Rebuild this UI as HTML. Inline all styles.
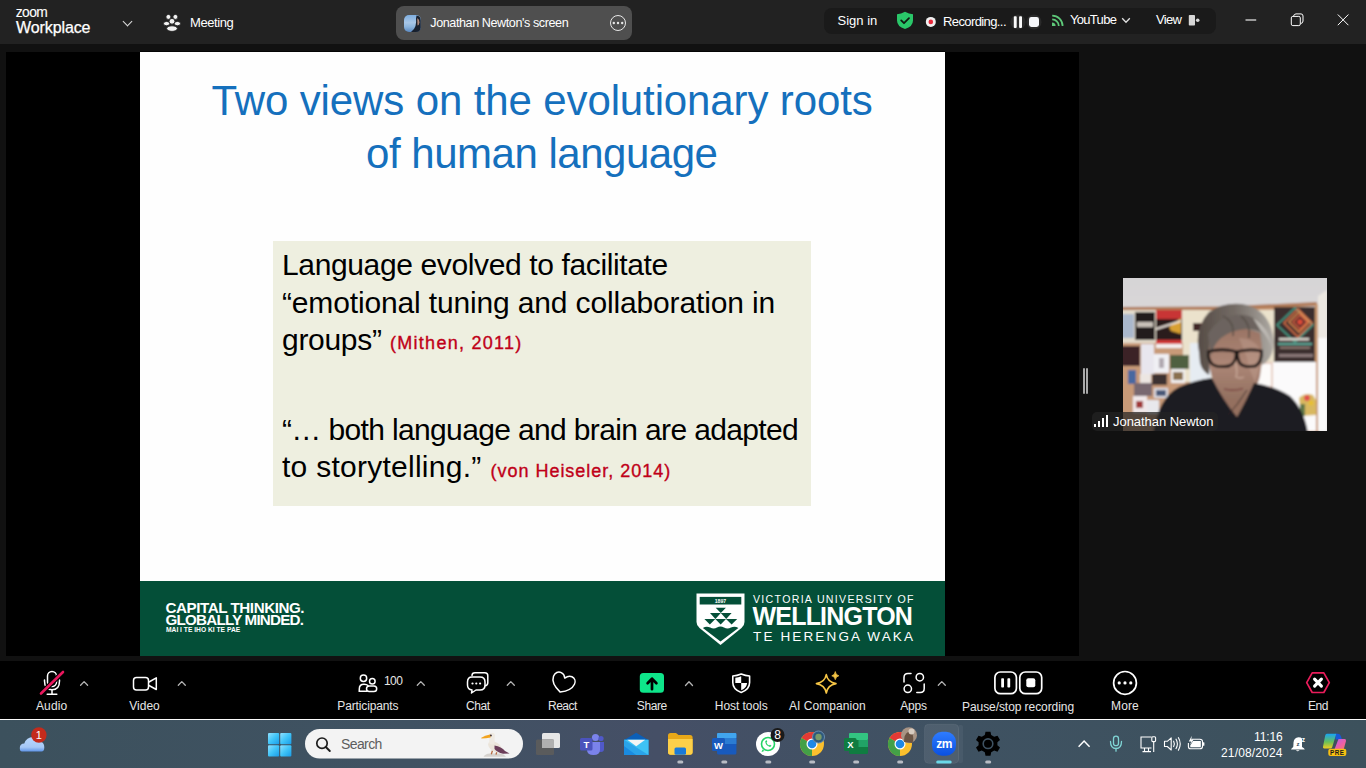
<!DOCTYPE html>
<html><head><meta charset="utf-8">
<style>
*{margin:0;padding:0;box-sizing:border-box}
html,body{width:1366px;height:768px;overflow:hidden;background:#111;font-family:"Liberation Sans",sans-serif}
.a{position:absolute}
.t{position:absolute;white-space:pre;line-height:1}
#top{left:0;top:0;width:1366px;height:44px;background:#222}
#share{left:6px;top:52px;width:1073px;height:604px;background:#000}
#slide{left:140px;top:52px;width:805px;height:604px;background:#fefefe;overflow:hidden}
#tool{left:0;top:661px;width:1366px;height:58px;background:#000}
#wline{left:0;top:719px;width:1366px;height:1px;background:#fafafa}
#task{left:0;top:720px;width:1366px;height:48px;background:linear-gradient(90deg,#3c515d 0%,#405262 30%,#454f66 48%,#3f5262 70%,#3c515c 100%)}
.ui{color:#fff;font-size:13px}
.lbl{color:#e6e6e6;font-size:12px}
.chev{position:absolute;width:6px;height:6px;border-left:1.5px solid #bdbdbd;border-top:1.5px solid #bdbdbd;transform:rotate(45deg)}
</style></head><body>
<!-- top bar -->
<div id="top" class="a"></div>
<div class="t" style="left:15.8px;top:6.1px;font-size:13.8px;color:#fff;letter-spacing:-0.6px;-webkit-text-stroke:0.12px #fff">zoom</div>
<div class="t" style="left:16px;top:20px;font-size:16px;color:#fff;-webkit-text-stroke:0.25px #fff;letter-spacing:-0.1px">Workplace</div>
<div class="a" style="left:124px;top:18px;width:7px;height:7px;border-right:1.5px solid #ddd;border-bottom:1.5px solid #ddd;transform:rotate(45deg)"></div>
<div class="t ui" style="left:190px;top:16.2px;letter-spacing:-0.4px">Meeting</div>

<div class="a" style="left:396px;top:6px;width:236px;height:34px;border-radius:8px;background:#4f4f4f"></div>
<div class="a" style="left:404px;top:15px;width:17px;height:17px;border-radius:5px;background:linear-gradient(180deg,#7eaee0 0%,#a8c6e6 45%,#8cb4dc 70%,#5a88c0 100%)"></div>
<div class="t" style="left:430.3px;top:17.2px;font-size:12.6px;color:#fff;letter-spacing:-0.42px">Jonathan Newton's screen</div>
<div class="a" style="left:610px;top:15px;width:16px;height:16px;border-radius:50%;border:1.4px solid #e8e8e8"></div>

<div class="a" style="left:824px;top:8px;width:392px;height:26px;border-radius:8px;background:#1a1a1a"></div>
<div class="t ui" style="left:837.5px;top:14.2px">Sign in</div>
<div class="t ui" style="left:943px;top:15.4px;letter-spacing:-0.6px">Recording...</div>
<div class="t ui" style="left:1070px;top:13.1px;letter-spacing:-0.7px">YouTube</div>
<div class="t ui" style="left:1156px;top:13px;letter-spacing:-0.7px">View</div>
<svg class="a" style="left:0;top:0" width="1366" height="44" viewBox="0 0 1366 44">
 <!-- meeting icon -->
 <g fill="#f2f2f2" stroke="#222" stroke-width="0.9">
  <ellipse cx="166.6" cy="23.6" rx="3.1" ry="2.2"/><ellipse cx="177.4" cy="23.6" rx="3.1" ry="2.2"/>
  <circle cx="168.4" cy="16.9" r="2.5"/><circle cx="175.4" cy="16.9" r="2.5"/>
  <ellipse cx="172" cy="28.6" rx="5.4" ry="2.8"/>
  <circle cx="172" cy="21.3" r="2.9"/>
 </g>
 <!-- avatar face -->
 <path d="M416.5,15.5 Q420.8,16 420.8,20.5 V27.5 Q420.5,31.8 416,32 L411,32 Q414.5,29.5 415.5,26 Q416.5,22.5 416,18.5 Z" fill="#18202e"/><path d="M417.2,18 Q419.5,19 419.5,22.5 Q419,25.5 417.5,25.5 Z" fill="#b08878"/>
 <!-- ellipsis dots -->
 <g fill="#e8e8e8"><circle cx="613.8" cy="23" r="1.2"/><circle cx="618" cy="23" r="1.2"/><circle cx="622.2" cy="23" r="1.2"/></g>
 <!-- shield green -->
 <path d="M905,11.8 Q909,14 913,14.2 V20.5 Q913,26.5 905,29 Q897,26.5 897,20.5 V14.2 Q901,14 905,11.8 Z" fill="#2ac769"/>
 <path d="M901.2,20.4 L904,23.2 L909,18.2" fill="none" stroke="#0f1a12" stroke-width="1.8" stroke-linecap="round" stroke-linejoin="round"/>
 <!-- record dot -->
 <circle cx="930.8" cy="21.9" r="5" fill="#f0f0f0"/>
 <circle cx="930.8" cy="21.9" r="2.3" fill="#e8283a"/>
 <!-- pause/stop -->
 <circle cx="1018" cy="22" r="7.6" fill="#2a2a2a"/>
 <circle cx="1034" cy="22" r="7.6" fill="#2a2a2a"/>
 <rect x="1013.8" y="16.2" width="2.9" height="11.8" rx="0.9" fill="#fafafa"/>
 <rect x="1019.1" y="16.2" width="2.9" height="11.8" rx="0.9" fill="#fafafa"/>
 <rect x="1029" y="17" width="10" height="10" rx="2.4" fill="#f6f7fa"/>
 <!-- rss -->
 <path d="M1052,22.4 A3.6,3.6 0 0 1 1055.6,26 H1052 Z" fill="#5ec879"/>
 <g fill="none" stroke="#5ec879" stroke-width="1.75">
  <path d="M1052.2,19.4 A6.6,6.6 0 0 1 1058.8,26"/>
  <path d="M1052.2,15.6 A10.4,10.4 0 0 1 1062.6,26"/>
 </g>
 <!-- youtube chevron -->
 <path d="M1122.2,18.3 L1126,22.3 L1129.8,18.3" fill="none" stroke="#e0e0e0" stroke-width="1.3"/>
 <!-- view icon -->
 <rect x="1188.8" y="15" width="6.2" height="10.5" rx="0.8" fill="#d6d6d6"/>
 <circle cx="1197.7" cy="20.2" r="1.8" fill="#d6d6d6"/>
 <!-- window controls -->
 <path d="M1245.5,20 H1256.2" stroke="#dcdcdc" stroke-width="1.3"/>
 <rect x="1291.3" y="16.4" width="9" height="9.2" rx="1.5" fill="none" stroke="#fff" stroke-width="1"/>
 <path d="M1293.5,16.2 Q1294,13.9 1296,13.9 H1301 Q1303,13.9 1303,16 V21 Q1303,23.2 1300.8,23.5" fill="none" stroke="#fff" stroke-width="1"/>
 <path d="M1337.8,14.5 L1348.4,25.2 M1348.4,14.5 L1337.8,25.2" stroke="#fff" stroke-width="1"/>
</svg>

<!-- share area -->
<div id="share" class="a"></div>
<div class="a" style="left:140px;top:51px;width:805px;height:1px;background:#050505"></div>
<div id="slide" class="a">
<div class="t" style="left:71.5px;top:28.2px;font-size:42px;color:#1570bd;letter-spacing:-0.12px">Two views on the evolutionary roots</div>
<div class="t" style="left:226px;top:81.2px;font-size:42px;color:#1570bd;letter-spacing:-0.48px">of human language</div>
<div class="a" style="left:133px;top:189px;width:538px;height:265px;background:#eeefe0"></div>
<div class="t" style="left:142px;top:197.9px;font-size:30px;color:#000;letter-spacing:-0.37px">Language evolved to facilitate</div>
<div class="t" style="left:142px;top:235.5px;font-size:30px;color:#000;letter-spacing:-0.15px">“emotional tuning and collaboration in</div>
<div class="t" style="left:142px;top:272.8px;font-size:30px;color:#000;letter-spacing:-0.3px">groups”</div>
<div class="t" style="left:250px;top:282.3px;font-size:18px;color:#c00018;letter-spacing:1.28px;-webkit-text-stroke:0.35px #c00018">(Mithen, 2011)</div>
<div class="t" style="left:142px;top:363.3px;font-size:30px;color:#000;letter-spacing:-0.64px">“… both language and brain are adapted</div>
<div class="t" style="left:142px;top:400.2px;font-size:30px;color:#000;letter-spacing:0.26px">to storytelling.”</div>
<div class="t" style="left:350.5px;top:410.1px;font-size:18px;color:#c00018;letter-spacing:0.98px;-webkit-text-stroke:0.35px #c00018">(von Heiseler, 2014)</div>
<div class="a" style="left:0;top:529px;width:805px;height:75px;background:#044f38"></div>
</div>

<!-- banner content -->
<div class="t" style="left:165.5px;top:599.8px;font-size:15.2px;font-weight:700;color:#fff;letter-spacing:-0.45px">CAPITAL THINKING.</div>
<div class="t" style="left:165.5px;top:611.6px;font-size:15.2px;font-weight:700;color:#fff;letter-spacing:-0.78px">GLOBALLY MINDED.</div>
<div class="t" style="left:166px;top:627.3px;font-size:6.7px;font-weight:700;color:#fff;letter-spacing:0px">MAI I TE IHO KI TE PAE</div>
<svg class="a" style="left:696px;top:593px" width="49" height="53" viewBox="0 0 49 53">
<path d="M0.5,0.5 H48.5 V29 Q48.5,32.5 45.5,35 L24.5,52 L3.5,35 Q0.5,32.5 0.5,29 Z" fill="#fff"/>
<rect x="3.7" y="3.9" width="41.6" height="7.6" fill="#044f38"/>
<text x="24.5" y="9.6" font-size="5.2" font-weight="700" fill="#fff" text-anchor="middle" font-family="Liberation Sans">1897</text>
<path d="M19.7,14.8 H29.9 L24.8,20 Z M14,20 H24.8 L19.4,26 Z M24.8,20 H35.6 L30.2,26 Z M8.4,26 H19.3 L13.85,31.6 Z M19.3,26 H30 L24.65,31.6 Z M30,26 H41.2 L35.6,31.6 Z" fill="#044f38"/>
<path d="M6.9,35 Q10.5,32.6 14.2,34.6 Q17.8,36.4 21,34.6 Q24.5,32.6 28,34.6 Q31.5,36.4 35,34.6 Q38.6,32.6 42.4,35 L24.5,48.5 Z" fill="#044f38"/>
</svg>
<div class="t" style="left:753px;top:593.5px;font-size:10.6px;color:#fff;letter-spacing:1.3px">VICTORIA UNIVERSITY OF</div>
<div class="t" style="left:752.5px;top:604.3px;font-size:25px;font-weight:700;color:#fff;letter-spacing:-0.8px">WELLINGTON</div>
<div class="t" style="left:753px;top:629.9px;font-size:13.5px;color:#fff;letter-spacing:2.14px">TE HERENGA WAKA</div>

<!-- right panel -->
<div class="a" style="left:1083px;top:368px;width:1.5px;height:26px;background:#a8a8a8;border-radius:1px"></div>
<div class="a" style="left:1086px;top:368px;width:1.5px;height:26px;background:#a8a8a8;border-radius:1px"></div>
<svg id="vid" class="a" style="left:1123px;top:278px" width="204" height="153" viewBox="0 0 204 153">
 <defs>
  <filter id="bl" x="-5%" y="-5%" width="110%" height="110%"><feGaussianBlur stdDeviation="0.8"/></filter>
  <linearGradient id="ceil" x1="0" y1="0" x2="0" y2="1"><stop offset="0" stop-color="#d6d4d6"/><stop offset="1" stop-color="#e4e2e0"/></linearGradient>
  <linearGradient id="hair" x1="0" y1="0" x2="1" y2="0"><stop offset="0" stop-color="#564c46"/><stop offset="0.5" stop-color="#746c66"/><stop offset="1" stop-color="#aeaaa4"/></linearGradient>
  <linearGradient id="skin" x1="0" y1="0" x2="0" y2="1"><stop offset="0" stop-color="#9a7464"/><stop offset="0.5" stop-color="#ac8676"/><stop offset="1" stop-color="#927060"/></linearGradient>
 </defs>
 <g filter="url(#bl)">
 <rect x="-2" y="-2" width="208" height="157" fill="url(#ceil)"/>
 <!-- board wall -->
 <rect x="-2" y="30" width="198" height="125" fill="#c89a78"/>
 <path d="M-2,29 L100,28.5 L194,24 V28 L100,32 L-2,32.5 Z" fill="#b07a56"/>
 <rect x="60" y="32" width="91" height="72" fill="#ebe2cc"/>
 <rect x="-2" y="32" width="62" height="33" fill="#e4dccc"/>
 <rect x="-2" y="36" width="13" height="24" fill="#aab8cc"/>
 <rect x="12" y="34" width="20" height="28" fill="#221c1e"/>
 <rect x="14" y="44" width="16" height="5" fill="#c8c0b8"/>
 <rect x="33" y="32" width="26" height="30" fill="#2a1e1e"/>
 <rect x="33" y="32" width="26" height="9" fill="#c83434"/>
 <path d="M46,49 L58,40 V56 L48,53 Z" fill="#d8a030"/>
 <path d="M33,50 L58,42 V44 L33,52 Z" fill="#f0e8e0"/>
 <rect x="33" y="62" width="26" height="4" fill="#d03838"/>
 <rect x="33" y="66" width="26" height="4" fill="#f4f0f0"/>
 <rect x="70" y="45" width="13" height="8" fill="#402828"/><rect x="78" y="45" width="5" height="8" fill="#c83838"/>
 <rect x="-2" y="68" width="19" height="20" fill="#3a2426"/>
 <rect x="18" y="66" width="13" height="30" fill="#e8e6ee"/>
 <rect x="31" y="76" width="15" height="19" fill="#f0f0f4"/>
 <rect x="36" y="80" width="5" height="10" fill="#b0a8b0"/>
 <rect x="47" y="77" width="19" height="14" fill="#506040"/>
 <rect x="48" y="91" width="14" height="14" fill="#f2f0f0"/><rect x="50" y="94" width="10" height="8" fill="#8a7050"/>
 <rect x="29" y="96" width="15" height="11" fill="#3e3232"/>
 <rect x="5" y="92" width="8" height="14" fill="#4a68a0"/>
 <rect x="17" y="96" width="11" height="11" fill="#ece6e2"/>
 <rect x="11" y="105" width="18" height="13" fill="#786870"/>
 <rect x="31" y="110" width="14" height="10" fill="#dcdce4"/><rect x="33" y="112" width="10" height="6" fill="#4a5878"/>
 <rect x="10" y="118" width="14" height="17" fill="#f0e8ea"/><rect x="13" y="123" width="7" height="7" fill="#a03838"/>
 <rect x="24" y="122" width="12" height="14" fill="#e8e8ec"/>
 <rect x="67" y="65" width="21" height="45" fill="#e6ecf2"/>
 <!-- right poster -->
 <rect x="151" y="29" width="42" height="56" fill="#3a2e2e"/>
 <g fill="none" stroke-width="1.3">
  <path d="M172,30 L190,47 L172,64 L154,47 Z" stroke="#40a890"/>
  <path d="M175,31 L189,45 L175,59 L161,45 Z" stroke="#e87848"/>
  <path d="M176,34 L186,44 L176,54 L166,44 Z" stroke="#f09050"/>
  <path d="M177,37 L184,44 L177,51 L170,44 Z" stroke="#e86040"/>
 </g>
 <path d="M177,40.5 L180.5,44 L177,47.5 L173.5,44 Z" fill="#e04838"/>
 <rect x="156" y="60" width="30" height="2.5" fill="#d8d4cc"/>
 <rect x="155" y="65" width="34" height="2" fill="#60a898"/>
 <rect x="157" y="69" width="30" height="1.5" fill="#a08880"/>
 <rect x="156" y="76" width="34" height="3" fill="#8a7878"/>
 <rect x="192" y="26" width="3" height="100" fill="#c89870"/>
 <path d="M195,18 L204,12 V153 H195 Z" fill="#ece8e2"/>
 <rect x="195" y="60" width="9" height="93" fill="#fafafa"/>
 <!-- window / whites -->
 <rect x="131" y="84" width="62" height="69" fill="#fbfafb"/>
 <rect x="132" y="84" width="18" height="26" fill="#e8cfc4"/>
 <rect x="134" y="86" width="14" height="22" fill="#fdfbfa"/>
 <path d="M176,120 Q182,114 190,117 L193,122 V137 L178,138 Z" fill="#d8b860"/>
 <circle cx="184" cy="120" r="3" fill="#e05050"/><circle cx="188" cy="125" r="2.5" fill="#e8c030"/>
 <rect x="177" y="126" width="5" height="12" fill="#607848"/>
 <!-- hair back -->
 <path d="M76,74 Q71,50 86,34 Q100,24 119,26 Q139,29 147,47 Q153,62 149,75 Q145,85 138,87 L134,62 Q120,52 100,54 Q90,60 88,74 L86,97 Q79,93 77,85 Z" fill="url(#hair)"/>
 <!-- neck -->
 <path d="M90,100 Q98,122 114,139 Q124,122 131,104 L128,96 L92,96 Z" fill="#94705f"/>
 <!-- face -->
 <path d="M87,56 Q112,45 137,55 Q141,76 137,98 Q133,116 119,122 Q104,124 95,113 Q86,98 86,78 Z" fill="url(#skin)"/>
 <path d="M116,60 Q130,60 136,70 Q138,90 132,104 Q126,92 124,80 Z" fill="#c0a090" opacity="0.45"/>
 <path d="M112,84 Q115,93 113,99 Q117,101 121,99" fill="none" stroke="#c8a898" stroke-width="1.3"/>
 <path d="M101,111 Q110,113.5 120,110.5" fill="none" stroke="#7e4c46" stroke-width="1.6"/>
 <!-- bangs -->
 <path d="M85,56 Q98,34 122,37 Q141,41 146,60 Q136,50 123,51 Q108,52 98,60 Q90,67 88,78 Z" fill="#6c645e"/>
 <path d="M100,38 Q112,44 110,58 M118,38 Q128,46 126,60" fill="none" stroke="#4e4640" stroke-width="1.2"/>
 <path d="M130,40 Q146,48 149,70 Q146,60 138,53 Z" fill="#bcb8b2"/>
 <!-- glasses -->
 <g fill="none" stroke="#1c1414" stroke-width="2.8">
  <path d="M85.5,73.5 Q99,70 113,73.5 Q114,84.5 106,88 Q94,90 89,86 Q84.5,80.5 85.5,73.5 Z"/>
  <path d="M114.5,73.5 Q127,70.5 138.5,73 Q139,84 133,87.8 Q121,90 117,85.5 Q114,80.5 114.5,73.5 Z"/>
 </g>
 <!-- shirt -->
 <path d="M30,155 Q36,119 56,109 Q72,102 89,100 Q99,121 114,139 Q124,121 131,105 Q151,108 167,118 Q181,131 185,155 Z" fill="#1c1a24"/>
 <path d="M104,138 Q114,128 124,112" fill="none" stroke="#2a2020" stroke-width="0.9"/>
 </g>
</svg>
<div class="a" style="left:1092px;top:411.5px;width:126px;height:19.5px;background:rgba(36,36,36,0.72);border-radius:5px"></div>
<div class="a" style="left:1094px;top:424px;width:2px;height:3px;background:#fff"></div>
<div class="a" style="left:1098px;top:421px;width:2px;height:6px;background:#fff"></div>
<div class="a" style="left:1102px;top:418px;width:2px;height:9px;background:#fff"></div>
<div class="a" style="left:1106px;top:415px;width:2px;height:12px;background:#fff"></div>
<div class="t" style="left:1113px;top:414.8px;font-size:13px;color:#fff;letter-spacing:-0.05px">Jonathan Newton</div>

<!-- toolbar -->
<div id="tool" class="a"></div>
<!-- toolbar icons -->
<svg class="a" style="left:0;top:661px" width="1366" height="58" viewBox="0 661 1366 58" fill="none" stroke="#fff" stroke-width="1.5" stroke-linecap="round" stroke-linejoin="round">
 <!-- audio -->
 <rect x="47.5" y="671.5" width="9" height="15" rx="4.5"/>
 <path d="M44.5,680 V681 Q44.5,689.8 52,689.8 Q59.5,689.8 59.5,681 V680"/>
 <path d="M52,690 V694"/><path d="M47.2,694.3 H56.8"/>
 <path d="M41,693.5 L63,672" stroke="#000" stroke-width="5"/>
 <path d="M41,693.5 L63,672" stroke="#e8175d" stroke-width="2.6"/>
 <!-- chevrons -->
 <g stroke="#b4b4b4" stroke-width="1.3">
  <path d="M80.6,685.3 L84.1,681.6 L87.6,685.3"/>
  <path d="M178.3,685.3 L181.8,681.6 L185.3,685.3"/>
  <path d="M417.3,685.3 L420.8,681.6 L424.3,685.3"/>
  <path d="M507.3,685.3 L510.8,681.6 L514.3,685.3"/>
  <path d="M685.5,685.5 L689,681.8 L692.5,685.5"/>
  <path d="M938.3,685.3 L941.8,681.6 L945.3,685.3"/>
 </g>
 <!-- video -->
 <rect x="133.5" y="677.5" width="15" height="12.5" rx="3"/>
 <path d="M149,682 L156.3,677.8 V689.5 L149,685.5"/>
 <!-- participants -->
 <circle cx="363.5" cy="678.3" r="3.2"/>
 <circle cx="372.3" cy="681.2" r="2.8"/>
 <path d="M359.3,691.3 V689 Q359.3,684.3 364,684.3 Q366.8,684.3 368,685.6"/>
 <path d="M359.3,691.3 H366.6"/>
 <rect x="366.5" y="686" width="10.2" height="5.6" rx="2.8"/>
 <!-- chat -->
 <path d="M472,675.5 Q472,672.8 475,672.8 H484.8 Q487.8,672.8 487.8,675.8 V682.5 Q487.8,685 485.5,685.8"/>
 <path d="M472,677 H480 Q485,677 485,682 V685 Q485,690 480,690 H476 L471.5,693 L472,690 Q467.5,689.5 467.5,685 V682 Q467.5,677 472,677 Z" fill="#000"/>
 <g fill="#fff" stroke="none"><circle cx="472.5" cy="683.5" r="1.1"/><circle cx="476.3" cy="683.5" r="1.1"/><circle cx="480.1" cy="683.5" r="1.1"/></g>
 <!-- react -->
 <path d="M563.5,692.5 C555,689 551.8,684.5 551.8,680 C551.8,676 554.5,673.5 557.8,673.8 C560.2,674 562,675.7 563,677.8 C564.5,675.4 566.8,673.8 569.3,674 C572.5,674.3 574.5,677 574.2,680.3 C573.8,685 569.5,689.5 563.5,692.5 Z" transform="rotate(20 563 683)"/>
 <!-- share -->
 <rect x="639.8" y="673" width="24.2" height="19.7" rx="3.5" fill="#0ee58a" stroke="none"/>
 <path d="M652,689.2 V679 M647.6,683.2 L652,678.6 L656.4,683.2" fill="none" stroke="#000" stroke-width="2.7" stroke-linecap="round" stroke-linejoin="round"/>
 <!-- host tools -->
 <path d="M741.2,674 Q745.5,675.8 749.6,676 V682.5 Q749.6,689.5 741.2,692.4 Q732.8,689.5 732.8,682.5 V676 Q737,675.8 741.2,674 Z" stroke-width="1.6"/>
 <path d="M735.3,677.8 Q738.5,677.3 741.2,676.3 V683 H735.3 Z" fill="#fff" stroke="none"/>
 <path d="M741.2,683 H747.1 Q746.8,688.3 741.2,690.2 Z" fill="#fff" stroke="none"/>
 <!-- ai companion -->
 <path d="M826.3,674.6 Q827.7,682.2 836,683.6 Q827.7,685 826.3,693 Q824.9,685 816.4,683.6 Q824.9,682.2 826.3,674.6 Z" stroke="#f6c545" stroke-width="1.6"/>
 <path d="M835.3,672 Q835.8,675.2 838.8,675.8 Q835.8,676.4 835.3,679.6 Q834.8,676.4 831.8,675.8 Q834.8,675.2 835.3,672 Z" fill="#f6c545" stroke="#f6c545" stroke-width="0.8"/>
 <!-- apps -->
 <path d="M904,682 V677.5 Q904,673.5 908,673.5 H911"/>
 <circle cx="919.8" cy="677.2" r="3.7"/>
 <circle cx="907.8" cy="688.8" r="3.7"/>
 <path d="M924.2,684 V688.5 Q924.2,692.5 920.2,692.5 H916.8"/>
 <!-- pause/stop -->
 <rect x="994.9" y="672" width="21.5" height="21.7" rx="5.5" stroke-width="1.7"/>
 <rect x="1019.8" y="672" width="21.9" height="21.7" rx="5.5" stroke-width="1.7"/>
 <g fill="#fff" stroke="none"><rect x="1001.2" y="678.3" width="2.8" height="9.3" rx="0.8"/><rect x="1007.4" y="678.3" width="2.8" height="9.3" rx="0.8"/><rect x="1026.3" y="678.3" width="9" height="9" rx="2"/></g>
 <!-- more -->
 <circle cx="1125" cy="682.9" r="11.4" stroke-width="1.7"/>
 <g fill="#fff" stroke="none"><circle cx="1119.2" cy="682.9" r="1.6"/><circle cx="1125" cy="682.9" r="1.6"/><circle cx="1130.8" cy="682.9" r="1.6"/></g>
 <!-- end -->
 <path d="M1312.2,672.9 H1323.8 L1329.3,682.7 L1323.8,692.5 H1312.2 L1306.7,682.7 Z" stroke="#ea1c5b" stroke-width="1.7"/>
 <path d="M1314.6,679.2 L1321.4,686.2 M1321.4,679.2 L1314.6,686.2" stroke-width="3.1" stroke-linecap="round"/>
</svg>
<div class="t lbl" style="left:36px;top:699.5px;letter-spacing:0.1px">Audio</div>
<div class="t lbl" style="left:129.3px;top:699.5px">Video</div>
<div class="t t2 lbl" style="left:384px;top:674.5px;letter-spacing:-0.6px">100</div>
<div class="t lbl" style="left:337.3px;top:699.5px;letter-spacing:-0.13px">Participants</div>
<div class="t lbl" style="left:466px;top:699.5px;letter-spacing:-0.4px">Chat</div>
<div class="t lbl" style="left:548px;top:699.5px;letter-spacing:-0.5px">React</div>
<div class="t lbl" style="left:636.8px;top:699.5px;letter-spacing:-0.4px">Share</div>
<div class="t lbl" style="left:714.8px;top:699.5px;letter-spacing:-0.05px">Host tools</div>
<div class="t lbl" style="left:789px;top:699.5px;letter-spacing:0.05px">AI Companion</div>
<div class="t lbl" style="left:900.2px;top:699.5px;letter-spacing:-0.15px">Apps</div>
<div class="t lbl" style="left:962px;top:701.2px;letter-spacing:-0.07px">Pause/stop recording</div>
<div class="t lbl" style="left:1111px;top:699.5px;letter-spacing:0.15px">More</div>
<div class="t lbl" style="left:1308px;top:699.5px;letter-spacing:-0.5px">End</div>
<div id="wline" class="a"></div>
<div id="task" class="a"></div>
<svg class="a" style="left:0;top:720px" width="1366" height="48" viewBox="0 720 1366 48">
 <defs>
  <linearGradient id="cl" x1="0" y1="0" x2="0" y2="1"><stop offset="0" stop-color="#b8d8ff"/><stop offset="0.7" stop-color="#a6c8f6"/><stop offset="1" stop-color="#5f95e8"/></linearGradient>
  <linearGradient id="win" x1="0" y1="0" x2="1" y2="1"><stop offset="0" stop-color="#8fe0ff"/><stop offset="0.5" stop-color="#3fc4f8"/><stop offset="1" stop-color="#1a9ce8"/></linearGradient>
  <linearGradient id="mail" x1="0" y1="0" x2="0" y2="1"><stop offset="0" stop-color="#2aa8f0"/><stop offset="1" stop-color="#1380d8"/></linearGradient>
  <linearGradient id="zm" x1="0" y1="0" x2="0" y2="1"><stop offset="0" stop-color="#2e7cff"/><stop offset="1" stop-color="#0a50e0"/></linearGradient>
  <linearGradient id="cop" x1="0" y1="0" x2="1" y2="1"><stop offset="0" stop-color="#3cc8f0"/><stop offset="0.45" stop-color="#7aa0f8"/><stop offset="0.7" stop-color="#d070e0"/><stop offset="1" stop-color="#f07090"/></linearGradient>
 </defs>
 <!-- cloud -->
 <path d="M22,751.5 Q19.8,751.5 19.8,748 Q19.8,743.5 24.3,743.5 Q26.5,737 33,737 Q40,737 41.5,742 Q44.3,743 44.3,747.5 Q44.3,751.5 41.5,751.5 Z" fill="url(#cl)"/>
 <circle cx="38.9" cy="735" r="7.7" fill="#c42b1c"/>
 <text x="38.9" y="739.3" font-size="11" fill="#fff" text-anchor="middle" font-family="Liberation Sans">1</text>
 <!-- windows -->
 <g fill="url(#win)"><rect x="268" y="733" width="11.2" height="11.2" rx="1"/><rect x="280.2" y="733" width="11.2" height="11.2" rx="1"/><rect x="268" y="745.2" width="11.2" height="11.2" rx="1"/><rect x="280.2" y="745.2" width="11.2" height="11.2" rx="1"/></g>
 <!-- search pill -->
 <rect x="305" y="729" width="218" height="29.5" rx="14.75" fill="#f3f3f3"/>
 <circle cx="322" cy="743.2" r="5.2" fill="none" stroke="#1c1c1c" stroke-width="1.7"/>
 <path d="M325.8,747 L329.8,751" stroke="#1c1c1c" stroke-width="1.9" stroke-linecap="round"/>
 <!-- bird -->
 <path d="M483.5,756.8 Q485,753.6 490,753.4 H500 Q504,753.8 506,756.8 Z" fill="#d6d2ce"/>
 <path d="M492.5,750.5 L491.3,754.2 M497,751 L496,754.6" stroke="#b86a40" stroke-width="1.3"/>
 <ellipse cx="495" cy="746.8" rx="7.6" ry="4.6" transform="rotate(32 495 746.8)" fill="#ebe4da"/>
 <path d="M489.2,736.5 H494.6 V743.5 Q492,745.5 489.2,743.2 Z" fill="#efeae2"/>
 <circle cx="492" cy="735.6" r="2.9" fill="#efeae2"/>
 <path d="M494.5,745.5 Q501.5,746.5 505,751 L509.6,753.6 L503,753.8 Q497,752.2 494.5,749 Z" fill="#6c3e5a"/>
 <circle cx="490.8" cy="735.4" r="1" fill="#2a1e2a"/>
 <path d="M481.3,737.8 Q485,735.2 490,734.5 L490.6,737.4 Q486,738.2 481.3,738.6 Z" fill="#f2a31e"/>
 <!-- task view -->
 <rect x="542" y="733" width="18" height="15" rx="1.5" fill="#e6e6e6"/>
 <rect x="536" y="739.5" width="18" height="15.5" rx="1.5" fill="#5c5c5c" opacity="0.95"/>
 <rect x="542" y="739.5" width="12" height="8.5" fill="#b0b0b0"/>
 <!-- teams -->
 <circle cx="595.5" cy="737.5" r="3.6" fill="#7b83eb"/>
 <circle cx="601" cy="738.5" r="2.6" fill="#5059c9"/>
 <path d="M597,742 H604 V749 Q604,752 601,752 Q598,752 597,749 Z" fill="#5059c9"/>
 <path d="M587,742 H600 V750 Q600,755 593.5,755 Q587,755 587,750 Z" fill="#7b83eb"/>
 <rect x="580" y="738" width="12.5" height="12.5" rx="1.5" fill="#4b53bc"/>
 <text x="586.3" y="748.3" font-size="9.5" font-weight="700" fill="#fff" text-anchor="middle" font-family="Liberation Sans">T</text>
 <!-- mail -->
 <path d="M624,740 L636.2,732.8 L648.5,740 Z" fill="#0b5fb8"/>
 <rect x="624" y="739.8" width="24.5" height="15.2" fill="#1c8de2"/>
 <path d="M648.5,739.8 V755 H636.2 L624,746 V739.8 Z" fill="#3ec2f4"/>
 <path d="M624,739.8 V755 H648.5 Z" fill="#1a8ae0" opacity="0.55"/>
 <path d="M627.3,739.8 H645.2 L636.2,746.2 Z" fill="#f4f4f4"/>
 <!-- folder -->
 <path d="M668,735.5 Q668,733 670.5,733 H676 L678.5,735 H690 Q692.6,735 692.6,737.5 V752 Q692.6,754.7 690,754.7 H670.5 Q668,754.7 668,752 Z" fill="#e8a818"/>
 <path d="M668,739 H692.6 V752 Q692.6,754.7 690,754.7 H670.5 Q668,754.7 668,752 Z" fill="#fcd04a"/>
 <rect x="674.5" y="747.5" width="11.5" height="7.2" rx="1.5" fill="#1a7ad8"/>
 <!-- word -->
 <rect x="717" y="733" width="19.4" height="21.5" rx="1.5" fill="#185abd"/>
 <rect x="717" y="733" width="19.4" height="5.5" fill="#41a5ee" rx="1"/>
 <rect x="717" y="738.5" width="19.4" height="5.5" fill="#2b7cd3"/>
 <rect x="712" y="738" width="13" height="13" rx="1.5" fill="#185abd"/>
 <text x="718.5" y="748.5" font-size="9.5" font-weight="700" fill="#fff" text-anchor="middle" font-family="Liberation Sans">W</text>
 <!-- whatsapp -->
 <circle cx="768" cy="744" r="12" fill="#fff"/>
 <circle cx="768" cy="744" r="6.5" fill="none" stroke="#25d366" stroke-width="1.6"/>
 <path d="M762.5,749.5 L761.5,752 L764.5,751" fill="#25d366"/>
 <path d="M765.2,741.5 Q765.5,745.5 770,747 L771.5,745.8 L770,744.8 L769,745.5 Q767,744.5 766.5,742.5 L767.3,741.5 L766.3,740 Z" fill="#25d366"/>
 <circle cx="777.5" cy="735" r="7" fill="#1a1a1a"/>
 <text x="777.5" y="739.3" font-size="12" fill="#fff" text-anchor="middle" font-family="Liberation Sans">8</text>
 <!-- chrome 1 -->
 <g transform="translate(812,744)">
  <circle r="12" fill="#fbc02d"/>
  <path d="M0,0 L-10.4,-6 A12,12 0 0 1 10.4,-6 Z" fill="#e53935"/>
  <path d="M0,0 L-10.4,-6 A12,12 0 0 0 0,12 Z" fill="#43a047"/>
  <circle r="5.5" fill="#fff"/><circle r="4.3" fill="#1e88e5"/>
 </g>
 <circle cx="818.5" cy="737" r="6" fill="#2e5a7c" stroke="#6a8cb0" stroke-width="1"/>
 <circle cx="818.5" cy="737" r="3.2" fill="#7a9a68"/>
 <!-- excel -->
 <rect x="849" y="733" width="19" height="21" rx="1.5" fill="#107c41"/>
 <rect x="849" y="733" width="19" height="7" rx="1" fill="#33c481"/>
 <rect x="858.5" y="740" width="9.5" height="7" fill="#21a366"/>
 <rect x="844" y="738" width="12.5" height="13" rx="1.5" fill="#107c41"/>
 <text x="850.3" y="748.3" font-size="9.5" font-weight="700" fill="#fff" text-anchor="middle" font-family="Liberation Sans">X</text>
 <!-- chrome 2 -->
 <g transform="translate(900,744)">
  <circle r="12" fill="#fbc02d"/>
  <path d="M0,0 L-10.4,-6 A12,12 0 0 1 10.4,-6 Z" fill="#e53935"/>
  <path d="M0,0 L-10.4,-6 A12,12 0 0 0 0,12 Z" fill="#43a047"/>
  <circle r="5.5" fill="#fff"/><circle r="4.3" fill="#1e88e5"/>
 </g>
 <circle cx="909" cy="735.2" r="8" fill="#a89484"/>
 <path d="M904,742 Q904,734 908,732 Q912,731 913,736 Q914,741 912,743 Z" fill="#6a5444"/>
 <circle cx="911.5" cy="731.5" r="3" fill="#d8ccc0"/>
 <!-- zoom highlighted -->
 <rect x="958" y="725" width="5" height="38" rx="2" fill="#ffffff" fill-opacity="0.05"/><rect x="924.5" y="724.3" width="34" height="39" rx="4" fill="#ffffff" fill-opacity="0.08" stroke="#ffffff" stroke-opacity="0.06"/>
 <rect x="932" y="731.8" width="24" height="24" rx="10" fill="url(#zm)"/>
 <text x="944" y="748" font-size="12" font-weight="700" fill="#fff" text-anchor="middle" font-family="Liberation Sans" letter-spacing="-0.6">zm</text>
 <rect x="936.2" y="760.5" width="15.5" height="3" rx="1.5" fill="#6ad8e8"/>
 <!-- settings gear -->
 <g transform="translate(988,743.7)">
  <path d="M-2.5,-12 H2.5 L3.2,-8.6 L6.2,-6.9 L9.5,-8 L12,-3.7 L9.4,-1.5 V1.5 L12,3.7 L9.5,8 L6.2,6.9 L3.2,8.6 L2.5,12 H-2.5 L-3.2,8.6 L-6.2,6.9 L-9.5,8 L-12,3.7 L-9.4,1.5 V-1.5 L-12,-3.7 L-9.5,-8 L-6.2,-6.9 L-3.2,-8.6 Z" fill="#000"/>
  <circle r="4.8" fill="none" stroke="#3e5262" stroke-width="1.6"/>
 </g>
 <!-- indicators -->
 <g fill="#b8bcc4">
  <rect x="677.3" y="760.5" width="6" height="3" rx="1.5"/>
  <rect x="721.3" y="760.5" width="6" height="3" rx="1.5"/>
  <rect x="765.3" y="760.5" width="6" height="3" rx="1.5"/>
  <rect x="809.2" y="760.5" width="6" height="3" rx="1.5"/>
  <rect x="853.2" y="760.5" width="6" height="3" rx="1.5"/>
  <rect x="897.2" y="760.5" width="6" height="3" rx="1.5"/>
  <rect x="985.2" y="760.5" width="6" height="3" rx="1.5"/>
 </g>
 <!-- tray -->
 <path d="M1078.6,746.8 L1084.1,741 L1089.6,746.8" fill="none" stroke="#fff" stroke-width="1.5"/>
 <g fill="none" stroke="#7fd4d4" stroke-width="1.3" stroke-linecap="round">
  <rect x="1113.5" y="736.2" width="5" height="9.5" rx="2.5"/>
  <path d="M1110.5,741.5 Q1110.5,748.5 1116,748.5 Q1121.5,748.5 1121.5,741.5"/>
  <path d="M1116,748.5 V751.2"/>
 </g>
 <g fill="none" stroke="#fff" stroke-width="1.1">
  <path d="M1151.5,737 H1141 V748 H1151.5"/>
  <path d="M1144.5,748 V751.5 M1148.5,748 V751.5 M1142.5,751.6 H1151"/>
  <rect x="1151.8" y="736.8" width="3.8" height="4.8" rx="1"/>
  <path d="M1153.7,741.6 V752"/>
 </g>
 <g fill="none" stroke="#fff" stroke-width="1.1" stroke-linejoin="round">
  <path d="M1164.5,741.3 H1167.3 L1171.2,737.8 V750 L1167.3,746.5 H1164.5 Z"/>
  <path d="M1173.5,740.8 Q1175.2,743.9 1173.5,747"/>
  <path d="M1175.8,738.8 Q1179,743.9 1175.8,749"/>
  <path d="M1178.2,737.2 Q1182.3,743.9 1178.2,750.6"/>
 </g>
 <g fill="none" stroke="#fff" stroke-width="1.1">
  <path d="M1191.5,739.2 H1199.8 Q1202.5,739.2 1202.5,741.5 V746.5 Q1202.5,748.8 1199.8,748.8 H1190.6 Q1188.4,748.8 1188.4,746.5 V743"/>
 </g>
 <rect x="1202.8" y="742.2" width="1.6" height="3.6" rx="0.5" fill="#fff"/>
 <path d="M1193,741 H1200.8 V747.2 H1190.3 V745.5 Z" fill="#fff"/>
 <path d="M1191.8,735.8 L1188.8,741.5 H1191.3 L1189.8,745.2 L1193.6,739.6 H1191.2 Z" fill="#fff"/>
 <!-- bell -->
 <path d="M1291,749.5 Q1291.5,748 1293.2,747 Q1293.5,744.5 1293.5,742.5 Q1294,737.8 1298.5,737.3 Q1301,737.4 1302,738.5 V747 Q1304.5,748 1304.8,749.5 Z" fill="#fff"/>
 <path d="M1296,750.3 Q1297.5,752.4 1299.6,750.3 Z" fill="#fff"/>
 <text x="1298" y="746.3" font-size="6" font-weight="700" fill="#34495a" text-anchor="middle" font-family="Liberation Sans">z</text>
 <text x="1303.3" y="741.8" font-size="6.5" font-weight="700" fill="#fff" text-anchor="middle" font-family="Liberation Sans">z</text>
 <!-- copilot -->
 <defs>
  <linearGradient id="cpl" x1="0" y1="0" x2="0" y2="1"><stop offset="0" stop-color="#18a4f4"/><stop offset="0.55" stop-color="#68c058"/><stop offset="1" stop-color="#f2cc20"/></linearGradient>
  <linearGradient id="cpr" x1="0" y1="0" x2="1" y2="1"><stop offset="0" stop-color="#b060f0"/><stop offset="0.6" stop-color="#f060a0"/><stop offset="1" stop-color="#f08060"/></linearGradient>
 </defs>
 <path d="M1335.5,733.8 H1338 Q1339.8,733.8 1340.8,736 L1342,739.5 H1335.5 Z" fill="#1858d8"/>
 <path d="M1326.8,733.8 H1336.3 L1332.2,747.2 Q1331.7,748.6 1330.2,748.6 H1324.2 Q1322.6,748.6 1323,746.8 L1325.2,735.5 Q1325.6,733.8 1326.8,733.8 Z" fill="url(#cpl)"/>
 <path d="M1338.5,739 H1344.6 Q1346.4,739 1346,741 L1344,748.2 Q1343.6,749.6 1342,749.6 H1334.4 Z" fill="url(#cpr)"/>
 <rect x="1328.3" y="748.8" width="18" height="7.2" rx="2" fill="#f8c012"/>
 <text x="1337.3" y="755" font-size="6.3" font-weight="700" fill="#1a1a1a" text-anchor="middle" font-family="Liberation Sans" letter-spacing="0.6">PRE</text>
</svg>
<div class="t" style="left:341px;top:737.3px;font-size:14px;color:#5d5d5d;letter-spacing:-0.6px">Search</div>
<div class="t" style="left:1254px;top:730.5px;font-size:12px;color:#fff;letter-spacing:-0.1px">11:16</div>
<div class="t" style="left:1221px;top:746.5px;font-size:12px;color:#fff;letter-spacing:0.15px">21/08/2024</div>
</body></html>
